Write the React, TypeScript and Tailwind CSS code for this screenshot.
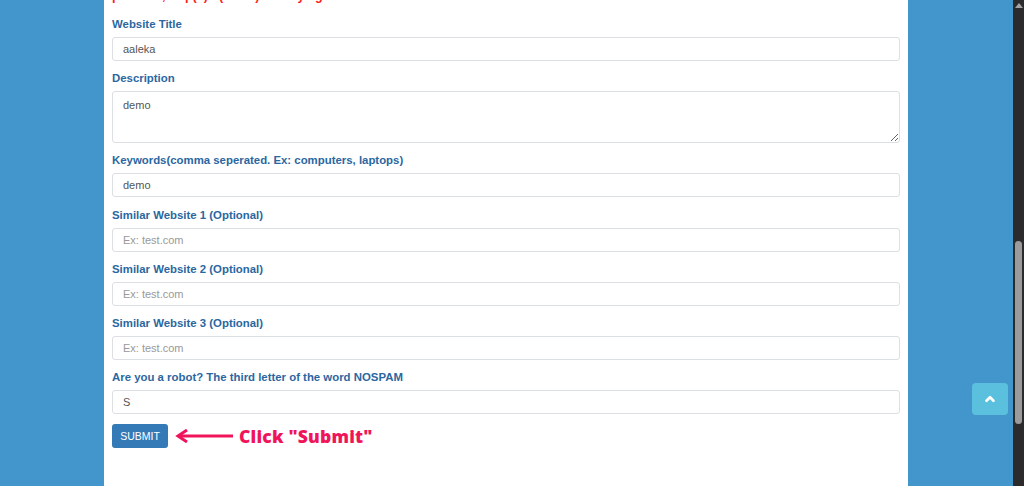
import { ChevronUpIcon } from "lucide-react";

const fields = [
  { label: "Website Title", value: "aaleka" },
  { label: "Description", value: "demo", area: true },
  { label: "Keywords(comma seperated. Ex: computers, laptops)", value: "demo" },
  { label: "Similar Website 1 (Optional)", placeholder: "Ex: test.com" },
  { label: "Similar Website 2 (Optional)", placeholder: "Ex: test.com" },
  { label: "Similar Website 3 (Optional)", placeholder: "Ex: test.com" },
  { label: "Are you a robot? The third letter of the word NOSPAM", value: "S" },
];

export default function App() {
  return (
    <div className="relative flex h-[486px] w-[1024px] overflow-hidden bg-[#4396cb] font-['Liberation_Sans',Arial,sans-serif]">
      <div className="w-[104px] shrink-0" />
      <main className="w-[804px] shrink-0 bg-white px-2">
        <p className="-mt-[11px] mb-[13px] text-[12.5px] font-bold leading-[15px] text-[#ff1a1a]">
          protocol, http(s)://(www.) and try again...
        </p>
        {fields.map((f) => (
          <div key={f.label} className="mb-[10.2px] flex flex-col">
            <label className="mb-[5px] text-[11.4px] font-bold leading-[15px] text-[#2b679f]">{f.label}</label>
            {f.area ? (
              <textarea
                defaultValue={f.value}
                className="h-[52px] rounded-[3px] border border-[#dcdfe3] px-[10px] py-[5px] text-[11px] text-[#555] outline-none"
              />
            ) : (
              <input
                defaultValue={f.value}
                placeholder={f.placeholder}
                className="h-[24px] rounded-[3px] border border-[#dcdfe3] px-[10px] text-[11px] text-[#555] outline-none placeholder:text-[#999]"
              />
            )}
          </div>
        ))}
        <div className="-mt-[1px] flex items-center">
          <button
            type="button"
            className="h-[24px] w-[56px] rounded-[3px] bg-[#337ab7] text-[10.5px] text-white"
          >
            SUBMIT
          </button>
          <svg width="60" height="14" viewBox="0 0 60 14" className="ml-[7px]">
            <path d="M4 7 H58" stroke="#f0145a" strokeWidth="3" />
            <path d="M12 1 L3 7 L12 13" fill="none" stroke="#f0145a" strokeWidth="3" strokeLinejoin="miter" />
          </svg>
          <span className="ml-[4px] font-['Open_Sans',sans-serif] text-[17.5px] font-extrabold tracking-[0.2px] text-[#f0145a]">
            Click "Submit"
          </span>
        </div>
      </main>
      <div className="flex-1" />
      <div className="flex w-[11px] shrink-0 flex-col items-center bg-[#2b2b2b]">
        <div className="mt-[3px] h-0 w-0 border-x-[4px] border-b-[5px] border-x-transparent border-b-[#a3a3a3]" />
        <div className="mt-[233px] h-[183px] w-[7px] rounded-full bg-[#9b9b9b]" />
      </div>
      <button
        type="button"
        className="absolute left-[972px] top-[383px] flex h-[32px] w-[36px] items-center justify-center rounded-[4px] bg-[#5bc0de] text-white"
      >
        <ChevronUpIcon className="size-[14px]" strokeWidth={4.5} />
      </button>
    </div>
  );
}
